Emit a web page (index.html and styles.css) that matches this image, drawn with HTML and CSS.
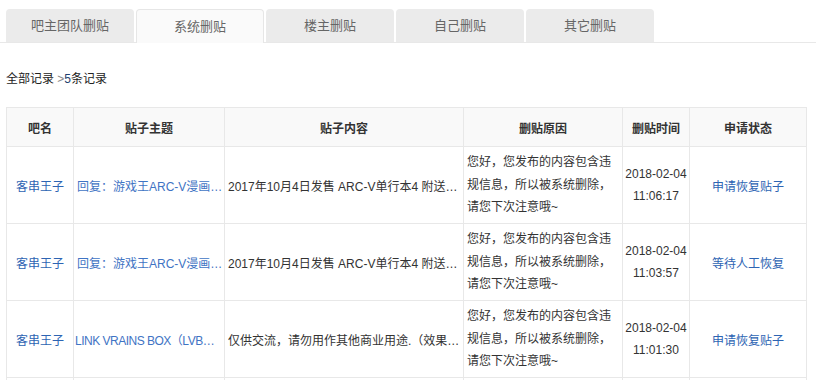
FILE: index.html
```html
<!DOCTYPE html>
<html lang="zh-CN">
<head>
<meta charset="utf-8">
<title>系统删贴</title>
<link rel="stylesheet" href="styles.css">
</head>
<body>
<div class="page">
  <div class="tabs">
    <div class="tab">吧主团队删贴</div>
    <div class="tab active">系统删贴</div>
    <div class="tab">楼主删贴</div>
    <div class="tab">自己删贴</div>
    <div class="tab">其它删贴</div>
  </div>
  <div class="content">
    <div class="crumb">全部记录 <span class="gt">&gt;</span><span class="num">5</span>条记录</div>
    <table class="records">
      <colgroup>
        <col class="c-name"><col class="c-topic"><col class="c-body"><col class="c-reason"><col class="c-time"><col class="c-state">
      </colgroup>
      <thead>
        <tr><th>吧名</th><th>贴子主题</th><th>贴子内容</th><th>删贴原因</th><th>删贴时间</th><th>申请状态</th></tr>
      </thead>
      <tbody>
        <tr>
          <td class="center"><a class="link" href="#">客串王子</a></td>
          <td class="clip"><a class="link topic" href="#">回复：游戏王ARC-V漫画…</a></td>
          <td class="clip">2017年10月4日发售 ARC-V单行本4 附送…</td>
          <td class="reason">您好，您发布的内容包含违规信息，所以被系统删除，请您下次注意哦~</td>
          <td class="center time">2018-02-04<br>11:06:17</td>
          <td class="center"><a class="link" href="#">申请恢复贴子</a></td>
        </tr>
        <tr>
          <td class="center"><a class="link" href="#">客串王子</a></td>
          <td class="clip"><a class="link topic" href="#">回复：游戏王ARC-V漫画…</a></td>
          <td class="clip">2017年10月4日发售 ARC-V单行本4 附送…</td>
          <td class="reason">您好，您发布的内容包含违规信息，所以被系统删除，请您下次注意哦~</td>
          <td class="center time">2018-02-04<br>11:03:57</td>
          <td class="center"><span class="link">等待人工恢复</span></td>
        </tr>
        <tr>
          <td class="center"><a class="link" href="#">客串王子</a></td>
          <td class="clip tight"><a class="link topic" href="#">LINK VRAINS BOX（LVB…</a></td>
          <td class="clip">仅供交流，请勿用作其他商业用途.（效果…</td>
          <td class="reason">您好，您发布的内容包含违规信息，所以被系统删除，请您下次注意哦~</td>
          <td class="center time">2018-02-04<br>11:01:30</td>
          <td class="center"><a class="link" href="#">申请恢复贴子</a></td>
        </tr>
        <tr>
          <td class="center"><a class="link" href="#">客串王子</a></td>
          <td class="clip"><a class="link topic" href="#">回复：LINK VRAINS…</a></td>
          <td class="clip">仅供交流，请勿用作其他商业用途</td>
          <td class="reason">您好，您发布的内容包含违规信息，所以被系统删除，请您下次注意哦~</td>
          <td class="center time">2018-02-04<br>10:58:12</td>
          <td class="center"><a class="link" href="#">申请恢复贴子</a></td>
        </tr>
      </tbody>
    </table>
  </div>
</div>
</body>
</html>
```
FILE: styles.css
```css
html, body {
  margin: 0;
  padding: 0;
  overflow: hidden;
  background: #fff;
}
body {
  font-family: "Liberation Sans", Arial, "Noto Sans CJK SC", sans-serif;
  font-size: 12px;
  color: #333;
}
.page {
  padding-top: 9px;
}
.tabs {
  display: flex;
  gap: 2px;
  padding-left: 6px;
  border-bottom: 1px solid #e8e8e8;
  height: 33px;
}
.tab {
  box-sizing: border-box;
  width: 128px;
  height: 33px;
  background: #ebebeb;
  border-radius: 4px 4px 0 0;
  color: #666;
  font-size: 13px;
  line-height: 34px;
  text-align: center;
}
.tab.active {
  background: #fafafa;
  border: 1px solid #e6e6e6;
  border-bottom: none;
  height: 34px;
  line-height: 33px;
}
.content {
  padding: 0 10px 0 6px;
}
.crumb {
  margin-top: 29px;
  height: 14px;
  line-height: 14px;
  font-size: 12px;
  color: #222;
}
.crumb .gt { color: #888; }
.crumb .num { color: #1f3f6f; }
.records {
  margin-top: 21px;
  width: 800px;
  border-collapse: collapse;
  table-layout: fixed;
}
.c-name { width: 67px; }
.c-topic { width: 151px; }
.c-body { width: 239px; }
.c-reason { width: 159px; }
.c-time { width: 67px; }
.c-state { width: 117px; }
.records th,
.records td {
  border: 1px solid #e8e8e8;
  padding: 0 4px;
}
.records th {
  height: 38px;
  background: #f9f9f9;
  font-weight: bold;
  color: #333;
  text-align: center;
}
.records td {
  height: 76px;
  vertical-align: middle;
}
.records td.clip {
  padding: 0 1px 0 3px;
}
.records td.tight {
  padding-left: 1px;
  padding-right: 0;
  letter-spacing: -0.5px;
}
.center { text-align: center; }
.clip {
  white-space: nowrap;
  overflow: hidden;
  text-overflow: ellipsis;
}
.reason {
  line-height: 22.5px;
}
.records td.reason {
  padding-left: 3px;
  padding-right: 2px;
}
.records td.time {
  line-height: 22px;
  color: #333;
  padding: 0;
  white-space: nowrap;
}
.link {
  color: #2d64b3;
  text-decoration: none;
}
.topic {
  color: #3f74c4;
}
```
